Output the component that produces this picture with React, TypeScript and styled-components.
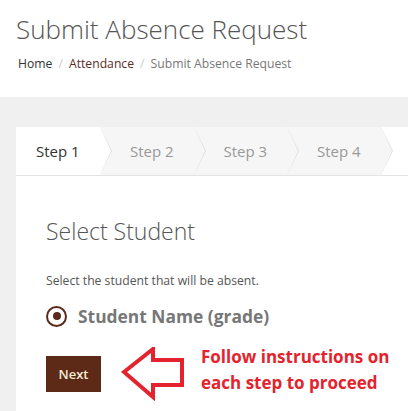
import styled, { createGlobalStyle } from 'styled-components';

const GlobalStyle = createGlobalStyle`
  html, body {
    margin: 0;
    padding: 0;
    background: #f0f0f0;
    font-family: "Open Sans", "Liberation Sans", sans-serif;
    overflow: hidden;
  }
`;

const Header = styled.header`
  background: #fff;
  padding: 11px 16px 0;
  height: 86px;
`;

const Title = styled.h1`
  margin: 0;
  font-size: 26px;
  font-weight: 300;
  line-height: 36px;
  color: #555;
`;

const Crumbs = styled.nav`
  display: flex;
  align-items: center;
  margin-top: 8px;
  padding-left: 2px;
  font-size: 12.2px;
  line-height: 18px;
  color: #777;
`;

const Crumb = styled.span<{ $color?: string }>`
  color: ${(p) => p.$color || '#777'};
`;

const Sep = styled.span`
  color: #ccc;
  padding: 0 6px;
`;

const Main = styled.main`
  padding: 30px 0 0 16px;
`;

const Card = styled.section`
  background: #fff;
  min-height: 300px;
`;

const Steps = styled.div`
  display: flex;
  height: 48px;
  border-bottom: 1px solid #e3e3e3;
  background: #fff;
`;

const Step = styled.div<{ $active?: boolean; $first?: boolean }>`
  position: relative;
  box-sizing: border-box;
  width: ${(p) => (p.$first ? '84px' : '93.5px')};
  flex-shrink: 0;
  height: 48px;
  padding-left: ${(p) => (p.$first ? '20px' : '30px')};
  display: flex;
  align-items: center;
  font-size: 15px;
  color: ${(p) => (p.$active ? '#333' : '#999')};
  background: ${(p) => (p.$active ? '#fff' : '#f6f6f6')};

  &::before,
  &::after {
    content: '';
    position: absolute;
    top: 0;
    width: 0;
    height: 0;
    border-top: 24px solid transparent;
    border-bottom: 24px solid transparent;
  }
  &::before {
    right: -12px;
    border-left: 12px solid #dedede;
    z-index: 1;
  }
  &::after {
    right: -11px;
    border-left: 11px solid ${(p) => (p.$active ? '#fff' : '#f6f6f6')};
    z-index: 2;
  }
`;

const Body = styled.div`
  padding: 40px 0 0 30px;
`;

const Heading = styled.h2`
  margin: 0;
  font-size: 23px;
  font-weight: 300;
  line-height: 30px;
  color: #555;
`;

const Hint = styled.p`
  margin: 26px 0 0;
  font-size: 12.2px;
  line-height: 18px;
  color: #555;
`;

const RadioRow = styled.label`
  display: flex;
  align-items: center;
  gap: 11px;
  margin-top: 14px;
`;

const Radio = styled.span`
  box-sizing: border-box;
  width: 21px;
  height: 21px;
  border-radius: 50%;
  border: 2.5px solid #5a2a1c;
  display: flex;
  align-items: center;
  justify-content: center;

  &::after {
    content: '';
    width: 8px;
    height: 8px;
    border-radius: 50%;
    background: #5a2a1c;
  }
`;

const RadioLabel = styled.span`
  font-size: 17.4px;
  font-weight: 700;
  color: #777;
`;

const ActionRow = styled.div`
  display: flex;
  align-items: center;
  margin-top: 16px;
`;

const NextButton = styled.button`
  width: 55px;
  height: 36px;
  border: none;
  background: #5c2a16;
  color: #f7ecd8;
  font-family: "Open Sans", "Liberation Sans", sans-serif;
  font-size: 13px;
  font-weight: 600;
  padding: 0;
  cursor: pointer;
`;

const Arrow = styled.svg`
  margin-left: 20px;
  flex-shrink: 0;
`;

const Note = styled.div`
  margin: 0 0 8px 16px;
  color: #e3232d;
  font-size: 17px;
  font-weight: 700;
  line-height: 26px;
  white-space: nowrap;
`;

const App = () => {
  return (
    <>
      <GlobalStyle />
      <Header>
        <Title>Submit Absence Request</Title>
        <Crumbs>
          <Crumb $color="#333">Home</Crumb>
          <Sep>/</Sep>
          <Crumb $color="#5b2c1f">Attendance</Crumb>
          <Sep>/</Sep>
          <Crumb>Submit Absence Request</Crumb>
        </Crumbs>
      </Header>
      <Main>
        <Card>
          <Steps>
            <Step $active $first>Step 1</Step>
            <Step>Step 2</Step>
            <Step>Step 3</Step>
            <Step>Step 4</Step>
          </Steps>
          <Body>
            <Heading>Select Student</Heading>
            <Hint>Select the student that will be absent.</Hint>
            <RadioRow>
              <Radio />
              <RadioLabel>Student Name (grade)</RadioLabel>
            </RadioRow>
            <ActionRow>
              <NextButton>Next</NextButton>
              <Arrow width="64" height="54" viewBox="0 0 64 54">
                <path
                  d="M3 25 L32 2 L32 13 L61 13 L61 38 L32 38 L32 50 Z"
                  fill="none"
                  stroke="#e3232d"
                  strokeWidth="4"
                  strokeLinejoin="miter"
                />
              </Arrow>
              <Note>
                Follow instructions on
                <br />
                each step to proceed
              </Note>
            </ActionRow>
          </Body>
        </Card>
      </Main>
    </>
  );
};

export default App;
